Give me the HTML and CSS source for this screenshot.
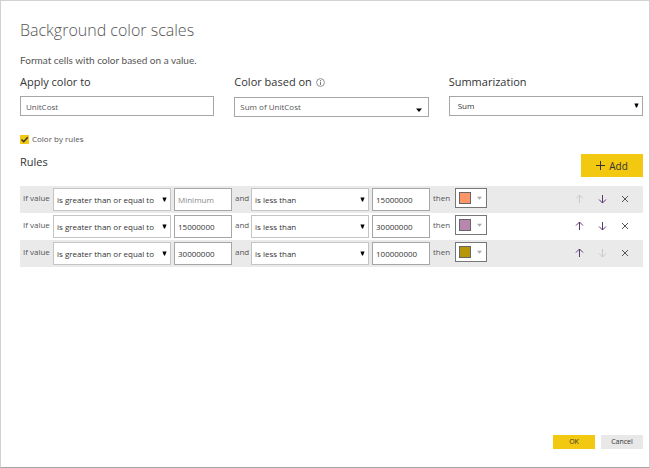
FILE: index.html
```html
<!DOCTYPE html>
<html lang="en">
<head>
<meta charset="utf-8">
<title>Background color scales</title>
<link rel="stylesheet" href="styles.css">
</head>
<body>
<svg class="sprite" aria-hidden="true">
  <symbol id="caret" viewBox="0 0 6 6"><path d="M0.5 0.5H5.5L3.6 5.5H2.4Z"/></symbol>
  <symbol id="caret-flat" viewBox="0 0 6 4"><path d="M0 0.5H6L3 4Z"/></symbol>
  <symbol id="up" viewBox="0 0 10 10"><path d="M5.5 9V1M2 4.5L5.5 1L9 4.5" fill="none" stroke="currentColor"/></symbol>
  <symbol id="down" viewBox="0 0 10 10"><path d="M5.5 1V9M2 5.5L5.5 9L9 5.5" fill="none" stroke="currentColor"/></symbol>
  <symbol id="cross" viewBox="0 0 10 10"><path d="M2 2L8 8M8 2L2 8" fill="none" stroke="currentColor"/></symbol>
</svg>
<main class="dialog">
  <h1>Background color scales</h1>
  <p class="intro">Format cells with color based on a value.</p>

  <div class="fields">
    <div class="field">
      <label for="apply">Apply color to</label>
      <input id="apply" class="box" type="text" value="UnitCost">
    </div>
    <div class="field based">
      <div class="label-line">
        <label for="based">Color based on</label>
        <svg class="info" viewBox="0 0 9 9" aria-hidden="true"><circle cx="4.5" cy="4.5" r="3.9" fill="none" stroke="currentColor" stroke-width=".8"/><path d="M4.5 2V3M4.5 3.8V7" stroke="currentColor"/></svg>
      </div>
      <div class="select">
        <select id="based" class="box"><option>Sum of UnitCost</option></select>
        <svg class="caret flat"><use href="#caret-flat"/></svg>
      </div>
    </div>
    <div class="field summary">
      <label for="summary">Summarization</label>
      <div class="select">
        <select id="summary" class="box"><option>Sum</option></select>
        <svg class="caret"><use href="#caret"/></svg>
      </div>
    </div>
  </div>

  <label class="check">
    <input type="checkbox" checked>
    <svg viewBox="0 0 9 9" aria-hidden="true"><path d="M1.5 4.5L3.7 6.7L7.7 2.3" fill="none" stroke="#333" stroke-width="1.5"/></svg>
    <span>Color by rules</span>
  </label>

  <div class="rules-head">
    <h2>Rules</h2>
    <button class="add" type="button">
      <svg viewBox="0 0 9 9" aria-hidden="true"><path d="M4.5 0V9M0 4.5H9" stroke="#333"/></svg>
      <span>Add</span>
    </button>
  </div>

  <div class="rules">
    <div class="rule">
      <span class="word">If value</span>
      <div class="select"><select aria-label="Lower comparison"><option>is greater than or equal to</option></select><svg class="caret"><use href="#caret"/></svg></div>
      <input type="text" placeholder="Minimum" aria-label="Lower value">
      <span class="word">and</span>
      <div class="select"><select aria-label="Upper comparison"><option>is less than</option></select><svg class="caret"><use href="#caret"/></svg></div>
      <input type="text" value="15000000" aria-label="Upper value">
      <span class="word">then</span>
      <button class="color" type="button" aria-label="Color"><span class="swatch orange"></span><svg><use href="#caret-flat"/></svg></button>
      <div class="actions">
        <button type="button" disabled aria-label="Move up"><svg><use href="#up"/></svg></button>
        <button type="button" aria-label="Move down"><svg><use href="#down"/></svg></button>
        <button class="remove" type="button" aria-label="Remove"><svg><use href="#cross"/></svg></button>
      </div>
    </div>
    <div class="rule">
      <span class="word">If value</span>
      <div class="select"><select aria-label="Lower comparison"><option>is greater than or equal to</option></select><svg class="caret"><use href="#caret"/></svg></div>
      <input type="text" value="15000000" aria-label="Lower value">
      <span class="word">and</span>
      <div class="select"><select aria-label="Upper comparison"><option>is less than</option></select><svg class="caret"><use href="#caret"/></svg></div>
      <input type="text" value="30000000" aria-label="Upper value">
      <span class="word">then</span>
      <button class="color" type="button" aria-label="Color"><span class="swatch purple"></span><svg><use href="#caret-flat"/></svg></button>
      <div class="actions">
        <button type="button" aria-label="Move up"><svg><use href="#up"/></svg></button>
        <button type="button" aria-label="Move down"><svg><use href="#down"/></svg></button>
        <button class="remove" type="button" aria-label="Remove"><svg><use href="#cross"/></svg></button>
      </div>
    </div>
    <div class="rule">
      <span class="word">If value</span>
      <div class="select"><select aria-label="Lower comparison"><option>is greater than or equal to</option></select><svg class="caret"><use href="#caret"/></svg></div>
      <input type="text" value="30000000" aria-label="Lower value">
      <span class="word">and</span>
      <div class="select"><select aria-label="Upper comparison"><option>is less than</option></select><svg class="caret"><use href="#caret"/></svg></div>
      <input type="text" value="100000000" aria-label="Upper value">
      <span class="word">then</span>
      <button class="color" type="button" aria-label="Color"><span class="swatch olive"></span><svg><use href="#caret-flat"/></svg></button>
      <div class="actions">
        <button type="button" aria-label="Move up"><svg><use href="#up"/></svg></button>
        <button type="button" disabled aria-label="Move down"><svg><use href="#down"/></svg></button>
        <button class="remove" type="button" aria-label="Remove"><svg><use href="#cross"/></svg></button>
      </div>
    </div>
  </div>

  <footer>
    <button class="ok" type="button">OK</button>
    <button type="button">Cancel</button>
  </footer>
</main>
</body>
</html>
```
FILE: styles.css
```css
* {
  box-sizing: border-box;
}

body {
  margin: 0;
  background: #fff;
  color: #555;
  font: 8px/12px "Open Sans", "Noto Sans", sans-serif;
}

h1,
h2,
p {
  margin: 0;
  font-weight: 400;
}

input,
select,
button {
  margin: 0;
  border: 0;
  border-radius: 0;
  color: #333;
  font: inherit;
}

button {
  display: flex;
  align-items: center;
  justify-content: center;
  padding: 0;
}

select {
  appearance: none;
}

.sprite {
  position: absolute;
  width: 0;
  height: 0;
}

.dialog {
  display: flex;
  flex-direction: column;
  min-height: 100vh;
  padding: 16px 6px 18px 19px;
  border: 1px solid #d2d2d2;
  border-bottom-color: #a6a6a6;
}

h1 {
  color: #555;
  font-size: 16px;
  font-weight: 300;
  line-height: 26px;
}

.intro {
  margin-top: 9px;
  font-family: Lato, "Open Sans", sans-serif;
  font-size: 10px;
  line-height: 16px;
}

.fields {
  display: grid;
  grid-template-columns: repeat(3, 1fr);
  gap: 20px;
  margin-top: 6px;
}

.field {
  color: #333;
  font-size: 11px;
  line-height: 16px;
}

.label-line {
  display: flex;
  align-items: center;
  gap: 4px;
}

.info {
  width: 9px;
  height: 9px;
  color: #777;
}

.box {
  display: block;
  width: 100%;
  height: 20px;
  margin-top: 6px;
  padding: 0 5px;
  border: 1px solid #a6a6a6;
  background: #fff;
  color: #555;
  font-size: 8px;
  line-height: 12px;
}

.based .box {
  margin-top: 7px;
}

.summary .box {
  padding-left: 8px;
  color: #333;
}

.select {
  position: relative;
}

.caret {
  position: absolute;
  right: 4px;
  top: 50%;
  width: 5px;
  height: 5px;
  margin-top: -3px;
  fill: #000;
  pointer-events: none;
}

.field .caret.flat {
  right: 7px;
  width: 6px;
  height: 4px;
  margin-top: 1px;
}

.check {
  display: flex;
  align-items: center;
  gap: 3px;
  position: relative;
  margin-top: 16px;
}

.check input {
  appearance: none;
  width: 9px;
  height: 9px;
  background: #f2c811;
}

.check svg {
  position: absolute;
  left: 0;
  width: 9px;
  height: 9px;
}

.rules-head {
  display: flex;
  justify-content: space-between;
  margin-top: 9px;
}

h2 {
  color: #333;
  font-size: 11px;
  line-height: 16px;
}

.add {
  gap: 4px;
  width: 62px;
  height: 23px;
  background: #f2c811;
  font-size: 10px;
}

.add svg {
  width: 9px;
  height: 9px;
}

.rules {
  margin-top: 9px;
}

.rule {
  display: grid;
  grid-template-columns: 27px 118px 58px 13px 118px 58px 19px 32px 1fr;
  column-gap: 3px;
  align-items: start;
  height: 27px;
  padding: 2px 13px 2px 3px;
}

.rule:nth-child(odd) {
  background: #eaeaea;
}

.word {
  padding-top: 4px;
  white-space: nowrap;
}

.rule input,
.rule select {
  display: block;
  width: 100%;
  height: 23px;
  padding: 0 3px;
  border: 1px solid #a6a6a6;
  background: #fff;
}

.rule select {
  border-color: #c4c4c4;
}

input::placeholder {
  color: #888;
}

.color {
  justify-content: flex-start;
  gap: 6px;
  height: 20px;
  padding-left: 3px;
  border: 1px solid #777;
  background: #fff;
}

.color svg {
  width: 5px;
  height: 4px;
  fill: #aaa;
}

.swatch {
  width: 12px;
  height: 12px;
  border: 1px solid #666;
}

.orange {
  background: #fd9666;
}

.purple {
  background: #b887ad;
}

.olive {
  background: #b6960b;
}

.actions {
  display: flex;
  justify-content: flex-end;
  gap: 13px;
  padding-top: 6px;
}

.actions button {
  width: 10px;
  height: 10px;
  background: none;
  color: #5c3a70;
}

.actions svg {
  width: 10px;
  height: 10px;
}

.actions button:disabled {
  color: #c8c8c8;
}

.actions .remove {
  color: #555;
}

footer {
  display: flex;
  justify-content: flex-end;
  gap: 6px;
  margin-top: auto;
}

footer button {
  width: 42px;
  height: 14px;
  background: #e8e8e8;
  font-size: 7px;
}

footer .ok {
  background: #f2c811;
}
```
